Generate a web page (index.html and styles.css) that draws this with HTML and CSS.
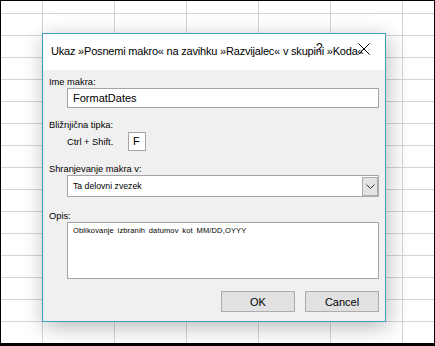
FILE: index.html
```html
<!DOCTYPE html>
<html>
<head>
<meta charset="utf-8">
<link rel="stylesheet" href="styles.css">
</head>
<body>
<div class="sheet">
  <div class="dialog">
    <div class="titlebar">
      <span class="title">Ukaz »Posnemi makro« na zavihku »Razvijalec« v skupini »Koda«</span>
      <span class="help">?</span>
      <svg class="close" width="12" height="12" viewBox="0 0 12 12"><path d="M0.5 0.5 L11.5 11.5 M11.5 0.5 L0.5 11.5" stroke="#000" stroke-width="1" fill="none"/></svg>
    </div>
    <div class="body">
      <div class="label l-name">Ime makra:</div>
      <div class="field input">FormatDates</div>
      <div class="label l-key">Bližnjična tipka:</div>
      <div class="keyrow">
        <span class="ctrl">Ctrl + Shift.</span>
        <span class="keybox">F</span>
      </div>
      <div class="label l-store">Shranjevanje makra v:</div>
      <div class="field select">
        <span class="seltext">Ta delovni zvezek</span>
        <span class="drop"><svg width="9" height="5" viewBox="0 0 9 5"><path d="M0.5 0.5 L4.5 4.5 L8.5 0.5" stroke="#333" stroke-width="1" fill="none"/></svg></span>
      </div>
      <div class="label l-desc">Opis:</div>
      <div class="field textarea">Oblikovanje izbranih datumov kot MM/DD,OYYY</div>
      <div class="buttons">
        <button class="btn">OK</button>
        <button class="btn">Cancel</button>
      </div>
    </div>
  </div>
</div>
</body>
</html>
```

FILE: styles.css
```css
html, body {
  margin: 0;
  padding: 0;
}
body {
  width: 435px;
  height: 346px;
  overflow: hidden;
  background: #fff;
}
.sheet {
  position: relative;
  box-sizing: border-box;
  width: 435px;
  height: 346px;
  border-top: 1px solid #000;
  border-left: 1px solid #000;
  border-right: 1px solid #000;
  border-bottom: 3px solid #000;
  background-color: #fff;
  background-image:
    linear-gradient(to right, #d4d4d4 1px, transparent 1px),
    linear-gradient(to bottom, #d4d4d4 1px, transparent 1px);
  background-size: 72px 22px;
  background-position: 41px 12px;
  font-family: "Segoe UI", "Liberation Sans", Arial, sans-serif;
}
.dialog {
  position: absolute;
  left: 41px;
  top: 32px;
  width: 344px;
  height: 289px;
  box-sizing: border-box;
  border: 1px solid #3c9ec0;
  background: #f0f0f0;
  box-shadow: 2px 5px 20px rgba(0,0,0,0.28);
  display: flex;
  flex-direction: column;
}
.titlebar {
  position: relative;
  flex: 0 0 36px;
  height: 36px;
  background: #fff;
  display: flex;
  align-items: center;
  padding-left: 8px;
}
.title {
  font-size: 11px;
  letter-spacing: -0.2px;
  color: #000;
  white-space: nowrap;
  margin-top: -3px;
}
.help {
  position: absolute;
  left: 273px;
  top: 7px;
  font-size: 12px;
  color: #000;
}
.close {
  position: absolute;
  left: 315px;
  top: 9px;
}
.body {
  flex: 1;
  padding: 0 6px;
  display: flex;
  flex-direction: column;
  font-size: 9.3px;
  color: #000;
}
.label {
  height: 12px;
  line-height: 12px;
}
.l-name { margin-top: 6px; }
.field {
  box-sizing: border-box;
  margin-left: 18px;
  width: 312px;
  background: #fff;
  border: 1px solid #a5a5a5;
  flex: none;
}
.input {
  height: 20px;
  font-size: 11px;
  line-height: 18px;
  padding-left: 5px;
}
.l-key { margin-top: 11px; }
.keyrow {
  margin-top: 1px;
  margin-left: 18px;
  display: flex;
  align-items: center;
  height: 19px;
  flex: none;
}
.ctrl {
  width: 61px;
}
.keybox {
  box-sizing: border-box;
  width: 18px;
  height: 19px;
  background: #fff;
  border: 1px solid #a5a5a5;
  font-size: 11px;
  line-height: 17px;
  padding-left: 4px;
}
.l-store { margin-top: 12px; }
.select {
  height: 22px;
  display: flex;
  align-items: center;
  justify-content: space-between;
  font-size: 8.7px;
}
.seltext {
  padding-left: 5px;
}
.drop {
  box-sizing: border-box;
  width: 17px;
  height: 20px;
  background: #e3e3e3;
  border: 1px solid #adadad;
  border-right-width: 2px;
  border-bottom-width: 2px;
  display: flex;
  align-items: center;
  justify-content: center;
  margin-right: -1px;
  margin-top: 1px;
}
.l-desc { margin-top: 13px; }
.textarea {
  height: 57px;
  font-size: 7.5px;
  padding: 3px 5px;
  letter-spacing: 0.15px;
  word-spacing: 1.5px;
}
.buttons {
  margin-top: 12px;
  display: flex;
  justify-content: flex-end;
  gap: 10px;
  width: 330px;
  flex: none;
}
.btn {
  box-sizing: border-box;
  width: 74px;
  height: 21px;
  background: #e1e1e1;
  border: 1px solid #adadad;
  font-family: "Segoe UI", "Liberation Sans", Arial, sans-serif;
  font-size: 11px;
  color: #000;
  padding: 0;
}
```
